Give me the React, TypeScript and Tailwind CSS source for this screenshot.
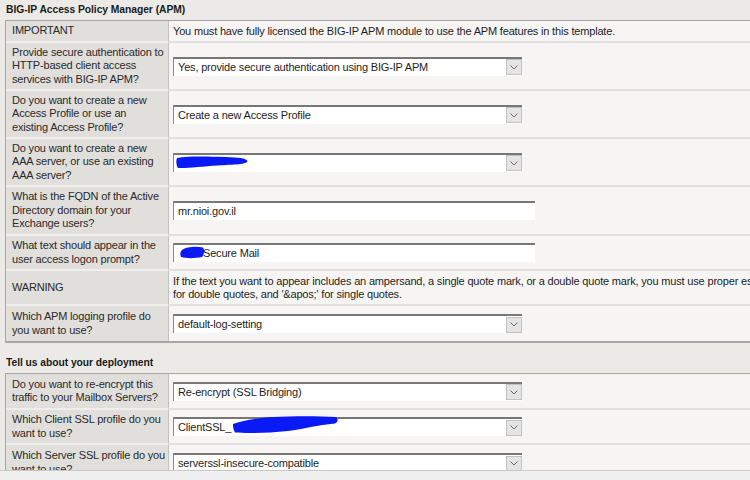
import React from "react";

function Chevron() {
  return (
    <div className="w-[16px] h-[16px] bg-[#e4e4e4] border border-[#c2c2c2] flex items-center justify-center shrink-0">
      <svg width="8" height="5" viewBox="0 0 8 5">
        <polyline points="0.5,0.5 4,4 7.5,0.5" fill="none" stroke="#6a6a6a" strokeWidth="1" />
      </svg>
    </div>
  );
}

function Select({ text, children }: { text?: string; children?: React.ReactNode }) {
  return (
    <div className="relative w-[349px] h-[19px] bg-white border-t-2 border-t-[#777] border-l border-l-[#8a8a8a] flex items-center">
      <div className="flex-1 pl-[4px] whitespace-nowrap overflow-hidden text-[#1e1e1e]">{text}</div>
      <Chevron />
      {children}
    </div>
  );
}

function Input({ text, children, pad = 4 }: { text?: string; children?: React.ReactNode; pad?: number }) {
  return (
    <div className="relative w-[362px] h-[19px] bg-white border-t-2 border-t-[#777] border-l border-l-[#8a8a8a] flex items-center">
      <div className={pad === 4 ? "pl-[4px] whitespace-nowrap text-[#1e1e1e]" : "pl-[29px] whitespace-nowrap text-[#1e1e1e]"}>{text}</div>
      {children}
    </div>
  );
}

type Row = { h: string; label: React.ReactNode; value: React.ReactNode; last?: boolean };

function Table({ rows }: { rows: Row[] }) {
  return (
    <div className="ml-[5px] w-[1100px] border-l border-t border-b-2 border-[#a6a6a6] flex flex-col">
      {rows.map((r, i) => (
        <div key={i} className={"flex " + r.h}>
          <div
            className={
              "w-[163px] shrink-0 bg-[#e1dfdc] border-r border-r-[#c4c2bf] pl-[6px] flex items-center leading-[13.5px] whitespace-nowrap text-[#2a2a2a] " +
              (r.last ? "" : "border-b-2 border-b-[#efeeec]")
            }
          >
            <div>{r.label}</div>
          </div>
          <div
            className={
              "flex-1 bg-[#f6f5f3] pl-[4px] flex items-center text-[#1e1e1e] " +
              (r.last ? "" : "border-b-2 border-b-[#e2e0dd]")
            }
          >
            {r.value}
          </div>
        </div>
      ))}
    </div>
  );
}

const BLUE = "#0a1af5";

export default function App() {
  const apmRows: Row[] = [
    {
      h: "h-[22px]",
      label: "IMPORTANT",
      value: <span className="whitespace-nowrap">You must have fully licensed the BIG-IP APM module to use the APM features in this template.</span>,
    },
    {
      h: "h-[48px]",
      label: (
        <>
          Provide secure authentication to
          <br />
          HTTP-based client access
          <br />
          services with BIG-IP APM?
        </>
      ),
      value: <Select text="Yes, provide secure authentication using BIG-IP APM" />,
    },
    {
      h: "h-[48px]",
      label: (
        <>
          Do you want to create a new
          <br />
          Access Profile or use an
          <br />
          existing Access Profile?
        </>
      ),
      value: <Select text="Create a new Access Profile" />,
    },
    {
      h: "h-[48px]",
      label: (
        <>
          Do you want to create a new
          <br />
          AAA server, or use an existing
          <br />
          AAA server?
        </>
      ),
      value: (
        <Select text="">
          <svg className="absolute left-[2px] top-[0px]" width="72" height="14" viewBox="0 0 72 14">
            <path d="M1 3 C 12 1, 30 1.5, 50 2 C 62 2.5, 70 3, 71.5 6 C 71 9.5, 58 9.5, 42 10.5 C 26 11.5, 10 13.5, 2 13 C 0 10, 0 5, 1 3 Z" fill={BLUE} />
          </svg>
        </Select>
      ),
    },
    {
      h: "h-[49px]",
      label: (
        <>
          What is the FQDN of the Active
          <br />
          Directory domain for your
          <br />
          Exchange users?
        </>
      ),
      value: <Input text="mr.nioi.gov.il" />,
    },
    {
      h: "h-[35px]",
      label: (
        <>
          What text should appear in the
          <br />
          user access logon prompt?
        </>
      ),
      value: (
        <Input text="Secure Mail" pad={29}>
          <svg className="absolute left-[6px] top-[1px]" width="25" height="13" viewBox="0 0 25 13">
            <path d="M2 4 C 6 1, 16 0, 23 1.5 C 25 4, 24 9, 22 11 C 15 12.5, 6 12.5, 1 11 C 0 8, 0 6, 2 4 Z" fill={BLUE} />
          </svg>
        </Input>
      ),
    },
    {
      h: "h-[35px]",
      label: "WARNING",
      value: (
        <div className="leading-[13px] whitespace-nowrap">
          If the text you want to appear includes an ampersand, a single quote mark, or a double quote mark, you must use proper escaping: '&amp;amp;' for ampersands, '&amp;quot;'
          <br />
          for double quotes, and '&amp;apos;' for single quotes.
        </div>
      ),
    },
    {
      h: "h-[35px]",
      label: (
        <>
          Which APM logging profile do
          <br />
          you want to use?
        </>
      ),
      value: <Select text="default-log-setting" />,
      last: true,
    },
  ];

  const depRows: Row[] = [
    {
      h: "h-[36px]",
      label: (
        <>
          Do you want to re-encrypt this
          <br />
          traffic to your Mailbox Servers?
        </>
      ),
      value: <Select text="Re-encrypt (SSL Bridging)" />,
    },
    {
      h: "h-[35px]",
      label: (
        <>
          Which Client SSL profile do you
          <br />
          want to use?
        </>
      ),
      value: (
        <Select text="ClientSSL_">
          <svg className="absolute left-[59px] top-[-3px]" width="106" height="18" viewBox="0 0 106 18">
            <path d="M0 8 C 10 4, 25 2, 40 1 C 60 0, 85 0, 103 1 C 105.5 3, 105 6, 102 7.5 C 85 9, 70 13, 55 15 C 35 17, 15 17.5, 2 16.5 C 0 13, 0 10, 0 8 Z" fill={BLUE} />
          </svg>
        </Select>
      ),
    },
    {
      h: "h-[35px]",
      label: (
        <>
          Which Server SSL profile do you
          <br />
          want to use?
        </>
      ),
      value: <Select text="serverssl-insecure-compatible" />,
      last: true,
    },
  ];

  return (
    <div className="w-[750px] h-[480px] overflow-hidden flex flex-col font-['Liberation_Sans',Arial,sans-serif] text-[11px] tracking-[-0.18px]">
      <div className="h-[470px] shrink-0 overflow-hidden bg-[#ebeae6]">
        <div className="h-[20px] pl-[6px] flex items-center font-bold text-[10.3px] tracking-[-0.05px] text-[#1a1a1a] whitespace-nowrap">
          BIG-IP Access Policy Manager (APM)
        </div>
        <Table rows={apmRows} />
        <div className="mt-[10px] h-[20px] pl-[6px] flex items-center font-bold text-[10.3px] tracking-[-0.05px] text-[#1a1a1a] whitespace-nowrap">
          Tell us about your deployment
        </div>
        <Table rows={depRows} />
      </div>
      <div className="h-[10px] shrink-0 bg-[#f0f0f0] border-t border-[#c8c8c8]" />
    </div>
  );
}
